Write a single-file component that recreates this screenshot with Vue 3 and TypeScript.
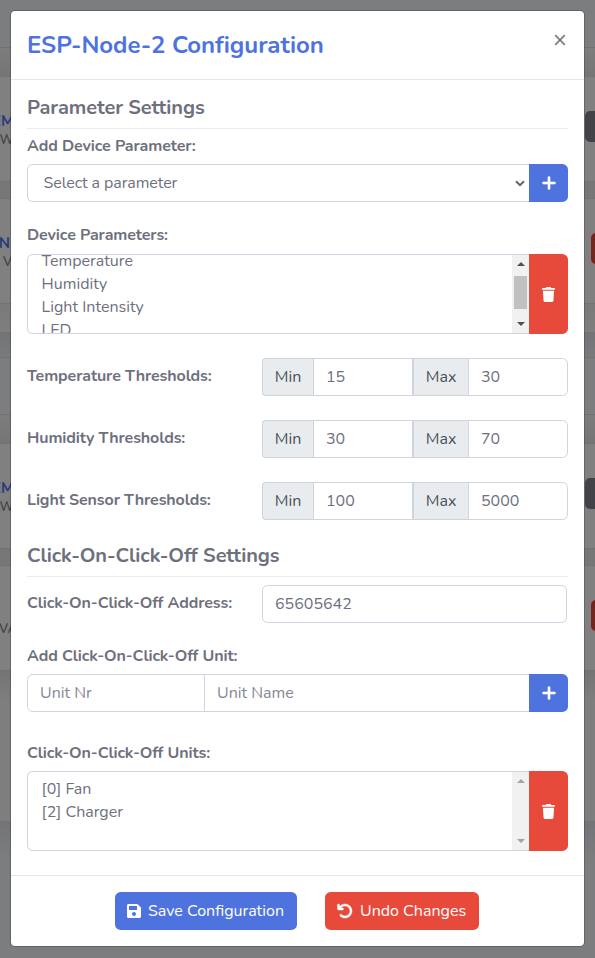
<script setup lang="ts">
import { ref } from 'vue'

interface Threshold {
  label: string
  min: string
  max: string
}

const thresholds = ref<Threshold[]>([
  { label: 'Temperature Thresholds:', min: '15', max: '30' },
  { label: 'Humidity Thresholds:', min: '30', max: '70' },
  { label: 'Light Sensor Thresholds:', min: '100', max: '5000' },
])
const parameters = ['Temperature', 'Humidity', 'Light Intensity', 'LED']
const units = ['[0] Fan', '[2] Charger']
const address = ref('65605642')
const unitNr = ref('')
const unitName = ref('')

const plusIcon =
  'M256 80c0-17.7-14.3-32-32-32s-32 14.3-32 32V224H48c-17.7 0-32 14.3-32 32s14.3 32 32 32H192V432c0 17.7 14.3 32 32 32s32-14.3 32-32V288H400c17.7 0 32-14.3 32-32s-14.3-32-32-32H256V80z'
const trashIcon =
  'M135.2 17.7L128 32H32C14.3 32 0 46.3 0 64S14.3 96 32 96H416c17.7 0 32-14.3 32-32s-14.3-32-32-32H320l-7.2-14.3C307.4 6.8 296.3 0 284.2 0H163.8c-12.1 0-23.2 6.8-28.6 17.7zM416 128H32L53.2 467c1.6 25.3 22.6 45 47.9 45H346.9c25.3 0 46.3-19.7 47.9-45L416 128z'
</script>

<template>
  <div class="screen">
    <div class="page">
      <div class="strip top"></div>
      <div class="strip head first"></div>
      <div class="strip card c1">
        <div class="peek p1"><b>EM</b><span>AW</span></div>
        <i class="tab gray"></i>
      </div>
      <div class="strip gap g1"></div>
      <div class="strip card c2">
        <div class="peek p2"><b>N</b><span>r V</span></div>
        <i class="tab red"></i>
      </div>
      <div class="strip head foot"></div>
      <div class="strip shade"></div>
      <div class="strip plain"></div>
      <div class="strip head second"></div>
      <div class="strip card c3">
        <div class="peek p3"><b>EM</b><span>AW</span></div>
        <i class="tab gray"></i>
      </div>
      <div class="strip gap g2"></div>
      <div class="strip card c4">
        <div class="peek p4"><span>VA</span></div>
        <i class="tab red"></i>
      </div>
      <div class="strip tail"></div>
      <div class="strip bottom"></div>
    </div>

    <div class="modal">
      <header class="header">
        <h4>ESP-Node-2 Configuration</h4>
        <button class="close" aria-label="Close">
          <svg width="12" height="12" viewBox="0 0 12 12"><path d="M1.2 1.2 10.8 10.8M10.8 1.2 1.2 10.8" /></svg>
        </button>
      </header>

      <main class="body">
        <h5 class="section">Parameter Settings</h5>
        <label class="label l1">Add Device Parameter:</label>
        <div class="group">
          <div class="select-wrap">
            <select class="control select">
              <option>Select a parameter</option>
            </select>
            <svg class="chevron" width="10" height="7" viewBox="0 0 10 7"><path d="M1 1.2 5 5.1 9 1.2" /></svg>
          </div>
          <button class="btn add" aria-label="Add parameter">
            <svg width="14" height="16" viewBox="0 0 448 512"><path :d="plusIcon" /></svg>
          </button>
        </div>

        <label class="label l2">Device Parameters:</label>
        <div class="group tall">
          <div class="list">
            <ul class="scrolled">
              <li v-for="p in parameters" :key="p">{{ p }}</li>
            </ul>
            <div class="bar">
              <i class="up"></i>
              <i class="thumb"></i>
              <i class="down"></i>
            </div>
          </div>
          <button class="btn del" aria-label="Delete parameter">
            <svg width="13" height="15" viewBox="0 0 448 512"><path :d="trashIcon" /></svg>
          </button>
        </div>

        <div v-for="t in thresholds" :key="t.label" class="row">
          <label class="label">{{ t.label }}</label>
          <div class="range">
            <span class="addon min">Min</span>
            <input v-model="t.min" class="control" />
            <span class="addon max">Max</span>
            <input v-model="t.max" class="control last" />
          </div>
        </div>

        <h5 class="section second">Click-On-Click-Off Settings</h5>
        <div class="row address">
          <label class="label">Click-On-Click-Off Address:</label>
          <input v-model="address" class="control single" />
        </div>

        <label class="label l3">Add Click-On-Click-Off Unit:</label>
        <div class="group">
          <input v-model="unitNr" class="control nr" placeholder="Unit Nr" />
          <input v-model="unitName" class="control name" placeholder="Unit Name" />
          <button class="btn add" aria-label="Add unit">
            <svg width="14" height="16" viewBox="0 0 448 512"><path :d="plusIcon" /></svg>
          </button>
        </div>

        <label class="label l4">Click-On-Click-Off Units:</label>
        <div class="group tall">
          <div class="list">
            <ul>
              <li v-for="u in units" :key="u">{{ u }}</li>
            </ul>
            <div class="bar idle">
              <i class="up"></i>
              <i class="down"></i>
            </div>
          </div>
          <button class="btn del" aria-label="Delete unit">
            <svg width="13" height="15" viewBox="0 0 448 512"><path :d="trashIcon" /></svg>
          </button>
        </div>
      </main>

      <footer class="footer">
        <button class="action save">
          <svg width="14" height="16" viewBox="0 0 448 512"><path d="M433.9 129.9l-83.9-83.9A48 48 0 0 0 316.1 32H48C21.5 32 0 53.5 0 80v352c0 26.5 21.5 48 48 48h352c26.5 0 48-21.5 48-48V163.9a48 48 0 0 0-14.1-34zM224 416c-35.3 0-64-28.7-64-64s28.7-64 64-64 64 28.7 64 64-28.7 64-64 64zm96-304.5V212c0 6.6-5.4 12-12 12H76c-6.6 0-12-5.4-12-12V108c0-6.6 5.4-12 12-12h228.5c3.2 0 6.2 1.3 8.5 3.5l3.5 3.5a12 12 0 0 1 3.5 8.5z" /></svg>
          <span>Save Configuration</span>
        </button>
        <button class="action undo">
          <svg width="16" height="16" viewBox="0 0 512 512"><path d="M125.7 160H176c17.7 0 32 14.3 32 32s-14.3 32-32 32H48c-17.7 0-32-14.3-32-32V64c0-17.7 14.3-32 32-32s32 14.3 32 32v51.2L97.6 97.6c87.5-87.5 229.3-87.5 316.8 0s87.5 229.3 0 316.8-229.3 87.5-316.8 0c-12.5-12.5-12.5-32.8 0-45.3s32.8-12.5 45.3 0c62.5 62.5 163.8 62.5 226.3 0s62.5-163.8 0-226.3-163.8-62.5-226.3 0L125.7 160z" /></svg>
          <span>Undo Changes</span>
        </button>
      </footer>
    </div>
  </div>
</template>

<style>
body {
  background: #7c7d7f;
  overflow: hidden;
}
</style>

<style scoped>
* {
  box-sizing: border-box;
}
.screen {
  position: relative;
  width: 595px;
  height: 958px;
  overflow: hidden;
  font-family: Nunito, Lato, sans-serif;
  font-size: 16px;
  line-height: 24px;
  color: #6e707e;
}

/* dimmed page under the dialog */
.page {
  display: flex;
  flex-direction: column;
  height: 100%;
}
.strip {
  flex: none;
  position: relative;
  overflow: hidden;
}
.top { height: 47px; background: #7c7d7f; }
.head { border-top: 1px solid #717276; background: linear-gradient(#7d7d7d, #757575); }
.first { height: 29px; }
.card { border-top: 1px solid #717276; background: #808080; }
.c1 { height: 105px; }
.gap { background: #777; border-top: 1px solid #717276; }
.g1 { height: 17px; }
.c2 { height: 105px; }
.foot { height: 29px; background: linear-gradient(#7a7a7a, #7e7e7e); }
.shade { height: 25px; background: linear-gradient(#737477, #797a7c); }
.plain { height: 57px; background: #7c7d7f; border-top: 1px solid #717276; }
.second { height: 29px; }
.c3 { height: 105px; }
.g2 { height: 17px; }
.c4 { height: 105px; }
.tail { height: 151px; background: linear-gradient(#747474, #7e7e7e 30px); border-top: 1px solid #717276; }
.bottom { flex: 1; background: linear-gradient(#737477, #7c7d7f 40px); }
.peek {
  position: absolute;
  right: 582px;
  top: 34px;
  display: flex;
  flex-direction: column;
  align-items: flex-end;
  line-height: 19px;
  white-space: nowrap;
  color: #43444d;
}
.peek b { color: #263c78; font-size: 15px; font-weight: 700; }
.peek span { font-size: 13px; font-weight: 600; }
.p1,
.p3 { top: 35px; right: 581px; }
.p2 { right: 583px; top: 35px; }
.p2 b { margin-right: 2px; }
.p4 { top: 54px; right: 578px; }
.tab {
  position: absolute;
  left: 585px;
  top: 34px;
  width: 20px;
  height: 31px;
  border-radius: 5px;
  background: #424249;
}
.tab.red { left: 591px; background: #74251d; }

/* dialog */
.modal {
  position: absolute;
  left: 10px;
  top: 10px;
  width: 575px;
  height: 937px;
  background: #fff;
  background-clip: padding-box;
  border: 1px solid rgba(0, 0, 0, 0.2);
  border-radius: 5px;
  display: flex;
  flex-direction: column;
}
.header {
  height: 69px;
  padding: 16px;
  border-bottom: 1px solid #e3e6f0;
  display: flex;
  justify-content: space-between;
}
h4 {
  margin: 0;
  padding-top: 4px;
  font-size: 24px;
  line-height: 29px;
  font-weight: 700;
  letter-spacing: -0.05px;
  color: #4e73df;
}
.close {
  border: 0;
  background: none;
  padding: 7px 2px 0 0;
  display: flex;
  height: 28px;
}
.close svg { fill: none; stroke: #7c7c7c; stroke-width: 1.7; }
.body {
  flex: 1;
  padding: 0 16px;
  display: flex;
  flex-direction: column;
}
.section {
  margin: 0;
  height: 49px;
  padding-top: 16px;
  border-bottom: 1px solid #e9ebf4;
  font-size: 20px;
  line-height: 24px;
  font-weight: 700;
  letter-spacing: -0.1px;
}
.section.second {
  height: 57px;
  padding-top: 24px;
}
.label {
  display: block;
  font-weight: 700;
  letter-spacing: -0.1px;
}
.l1 { margin: 5px 0 6px; }
.l2 { margin: 21px 0 7px; }
.l3 { margin: 21px 0 6px; }
.l4 { margin: 29px 0 6px; }
.group {
  display: flex;
  height: 38px;
}
.group.tall { height: 80px; }
.control {
  width: 100%;
  min-width: 0;
  height: 38px;
  padding: 0 12px;
  border: 1px solid #d1d3e2;
  border-radius: 5.6px;
  background: #fff;
  color: #6e707e;
  font: inherit;
  outline: none;
}
.control::placeholder { color: #858796; opacity: 1; }
.select-wrap { position: relative; flex: 1; }
.select {
  appearance: none;
  padding: 0 15.5px;
  border-right: 0;
  border-radius: 5.6px 0 0 5.6px;
  letter-spacing: -0.08px;
}
.chevron {
  position: absolute;
  right: 4px;
  top: 16px;
  fill: none;
  stroke: #5f616e;
  stroke-width: 2;
}
.btn {
  flex: none;
  width: 39px;
  padding: 0;
  border: 0;
  border-radius: 0 5.6px 5.6px 0;
  display: flex;
  align-items: center;
  justify-content: center;
}
.add { background: #4e73df; }
.add svg { fill: #fff; stroke: #fff; stroke-width: 20; }
.del { background: #e74a3b; }
.del svg { fill: #fff; }
.list {
  flex: 1;
  display: flex;
  border: 1px solid #d1d3e2;
  border-right: 0;
  border-radius: 5.6px 0 0 5.6px;
  overflow: hidden;
}
ul {
  flex: 1;
  margin: 0;
  padding: 6px 13.6px;
  list-style: none;
  line-height: 23px;
}
ul.scrolled { margin-top: -11px; }
.bar {
  position: relative;
  width: 17px;
  height: 78px;
  background: #f1f1f1;
  color: #505050;
}
.bar.idle { color: #a3a3a3; }
.up,
.down {
  position: absolute;
  left: 5px;
  border: 4px solid transparent;
}
.up { top: 3px; border-bottom-color: currentColor; }
.down { bottom: 3px; border-top-color: currentColor; }
.thumb {
  position: absolute;
  left: 2px;
  top: 21px;
  width: 13px;
  height: 33px;
  background: #c1c1c1;
}
.row {
  display: flex;
  height: 38px;
  margin-top: 24px;
}
.row .label {
  width: 235px;
  padding-top: 6px;
}
.range {
  flex: 1;
  display: grid;
  grid-template-columns: 51px 100px 56px 99px;
}
.range .control { border-radius: 0; }
.range .control.last {
  width: 100px;
  margin-left: -1px;
  border-radius: 0 5.6px 5.6px 0;
}
.addon {
  display: flex;
  align-items: center;
  justify-content: center;
  border: 1px solid #ced4da;
  background: #e9ecef;
  color: #495057;
}
.addon.min { border-right: 0; border-radius: 4px 0 0 4px; }
.row.address { margin-top: 8px; }
.control.single { width: 305px; }
.control.nr {
  flex: none;
  width: 178px;
  border-radius: 5.6px 0 0 5.6px;
}
.control.name {
  flex: 1;
  margin-left: -1px;
  border-right: 0;
  border-radius: 0;
}
.footer {
  height: 71px;
  border-top: 1px solid #e3e6f0;
  padding: 16px 1px 0 0;
  display: flex;
  justify-content: center;
  gap: 28px;
}
.action {
  display: flex;
  align-items: center;
  height: 38px;
  padding: 0 12px;
  border: 0;
  border-radius: 5.6px;
  color: #fff;
  font: inherit;
  white-space: nowrap;
}
.action svg { fill: #fff; flex: none; }
.save { width: 182px; background: #4e73df; }
.save svg { margin-right: 7px; }
.undo { width: 154px; background: #e74a3b; }
.undo svg { margin-right: 7px; stroke: #fff; stroke-width: 14; }
</style>
